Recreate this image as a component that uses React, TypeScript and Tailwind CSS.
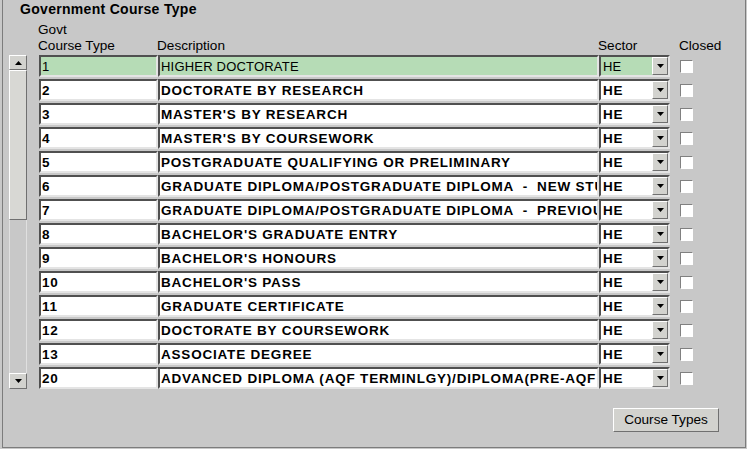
// government course type form - legacy forms look

const rows: [string, string][] = [
  ['1', 'HIGHER DOCTORATE'],
  ['2', 'DOCTORATE BY RESEARCH'],
  ['3', "MASTER'S BY RESEARCH"],
  ['4', "MASTER'S BY COURSEWORK"],
  ['5', 'POSTGRADUATE QUALIFYING OR PRELIMINARY'],
  ['6', 'GRADUATE DIPLOMA/POSTGRADUATE DIPLOMA  -  NEW STUDY AREA'],
  ['7', 'GRADUATE DIPLOMA/POSTGRADUATE DIPLOMA  -  PREVIOUS STUDY AREA'],
  ['8', "BACHELOR'S GRADUATE ENTRY"],
  ['9', "BACHELOR'S HONOURS"],
  ['10', "BACHELOR'S PASS"],
  ['11', 'GRADUATE CERTIFICATE'],
  ['12', 'DOCTORATE BY COURSEWORK'],
  ['13', 'ASSOCIATE DEGREE'],
  ['20', 'ADVANCED DIPLOMA (AQF TERMINLGY)/DIPLOMA(PRE-AQF TERMINLGY)'],
]

const sunken =
  'border-2 border-t-[#505050] border-l-[#505050] border-b-[#e4e4e4] border-r-[#e4e4e4]'
const raised =
  'border border-t-white border-l-white border-b-[#707070] border-r-[#707070]'

function Arrow({ up }: { up?: boolean }) {
  return (
    <svg width="7" height="4" viewBox="0 0 7 4" className="block">
      <path d={up ? 'M3.5 0 L7 4 L0 4 Z' : 'M0 0 L7 0 L3.5 4 Z'} fill="#000" />
    </svg>
  )
}

function Row({ code, desc, current }: { code: string; desc: string; current: boolean }) {
  const bg = current ? 'bg-[#b6dcb6]' : 'bg-white'
  const weight = current ? 'font-normal tracking-[0.2px]' : 'font-bold text-[13.5px] tracking-[0.8px]'
  return (
    <div className="flex items-center h-[24px]">
      <div className={`w-[119px] h-[22px] ${sunken} ${bg} ${weight} flex items-center pl-[1px] overflow-hidden whitespace-pre`}>
        {code}
      </div>
      <div className={`w-[441px] h-[22px] ${sunken} ${bg} ${weight} flex items-center pl-[1px] overflow-hidden whitespace-pre`}>
        {desc}
      </div>
      <div className={`w-[71px] h-[22px] ${sunken} ${bg} ${weight} flex items-center pl-[2px] justify-between`}>
        <span>HE</span>
        <div className={`w-[16px] h-[18px] ${raised} bg-[#d2d2ce] flex items-center justify-center`}>
          <Arrow />
        </div>
      </div>
      <div className="ml-[10px] w-[13px] h-[13px] border border-t-[#808080] border-l-[#808080] border-b-white border-r-white bg-white" />
    </div>
  )
}

export default function App() {
  return (
    <div className="w-[747px] h-[449px] bg-[#c8c8c8] overflow-hidden font-['Liberation_Sans',Arial,sans-serif] text-black">
      <div className="ml-[2px] w-[744px] h-[448px] border-l border-r border-b border-[#7c7c7c]">
        <div className="pl-[17px] pt-[1px] text-[14px] font-bold tracking-[0.3px] leading-[16px]">Government Course Type</div>

        {/* column headers */}
        <div className="flex items-end text-[13.6px] leading-[16px] mt-[5px] h-[32px]">
          <div className="ml-[35px] w-[119px]">
            <div>Govt</div>
            <div>Course Type</div>
          </div>
          <div className="w-[441px]">Description</div>
          <div className="w-[81px]">Sector</div>
          <div>Closed</div>
        </div>

        <div className="flex">
          {/* scroll bar */}
          <div className="ml-[6px] w-[18px] h-[334px] flex flex-col mt-[1px]">
            <div className={`h-[15px] ${raised} bg-[#d2d2ce] flex items-center justify-center`}>
              <Arrow up />
            </div>
            <div className={`h-[150px] ${raised} bg-[#d8d8d4]`} />
            <div className="flex-1 border-l border-r border-[#e0e0e0] bg-[#c8c8c8]" />
            <div className={`h-[16px] ${raised} bg-[#d2d2ce] flex items-center justify-center`}>
              <Arrow />
            </div>
          </div>

          <div className="ml-[12px] text-[13px] leading-[15px]">
            {rows.map(([c, d], i) => (
              <Row key={c} code={c} desc={d} current={i === 0} />
            ))}
          </div>
        </div>

        <div className="flex justify-end pr-[26px] mt-[18px]">
          <button className={`w-[106px] h-[24px] ${raised} border-b-[#404040] border-r-[#404040] bg-[#d2d2ce] text-[13.6px]`}>
            Course Types
          </button>
        </div>
      </div>
    </div>
  )
}
